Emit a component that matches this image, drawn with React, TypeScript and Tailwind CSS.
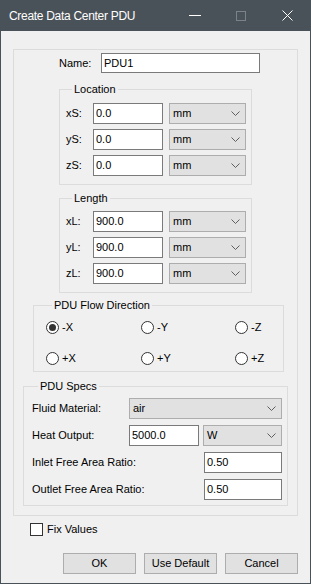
import type { ReactNode } from "react";

const font = { fontFamily: '"Liberation Sans", Arial, sans-serif' };

function Chevron() {
  return (
    <svg width="9" height="5" viewBox="0 0 9 5" className="shrink-0">
      <polyline points="0.5,0.5 4.5,4.5 8.5,0.5" fill="none" stroke="#5f5f5f" strokeWidth="1" />
    </svg>
  );
}

function Combo({ value, width }: { value: string; width: string }) {
  return (
    <div className={`${width} h-[21px] flex items-center justify-between bg-[#e1e1e1] border border-[#adadad] pl-[3px] pr-[5px]`}>
      <span>{value}</span>
      <Chevron />
    </div>
  );
}

function TextBox({ value, width }: { value: string; width: string }) {
  return (
    <div className={`${width} h-[21px] flex items-center bg-white border border-[#7a7a7a] pl-[2px]`}>
      {value}
    </div>
  );
}

function Group({ title, className, children }: { title: string; className: string; children: ReactNode }) {
  return (
    <div className={`border border-[#dcdcdc] ${className}`}>
      <div className="-mt-[7px] ml-[6px] w-fit px-[2px] leading-[13px] bg-[#f0f0f0]">{title}</div>
      {children}
    </div>
  );
}

function AxisRow({ label, value }: { label: string; value: string }) {
  return (
    <div className="flex items-center">
      <span className="w-[27px]">{label}</span>
      <TextBox value={value} width="w-[70px]" />
      <div className="w-[6px]" />
      <Combo value="mm" width="w-[77px]" />
    </div>
  );
}

function Radio({ label, checked = false }: { label: string; checked?: boolean }) {
  return (
    <div className="flex items-center gap-[3px] h-[13px]">
      <div className="w-[13px] h-[13px] rounded-full border border-[#333] bg-white flex items-center justify-center">
        {checked && <div className="w-[7px] h-[7px] rounded-full bg-[#333]" />}
      </div>
      <span>{label}</span>
    </div>
  );
}

function Button({ label }: { label: string }) {
  return (
    <div className="w-[73px] h-[21px] flex items-center justify-center bg-[#e1e1e1] border border-[#adadad]">
      {label}
    </div>
  );
}

export default function App() {
  return (
    <div className="w-[311px] h-[584px] flex flex-col bg-[#f0f0f0] text-[11px] text-black border-x border-b border-[#4a5259]" style={font}>
      {/* Title bar */}
      <div className="-mx-px h-[31px] shrink-0 flex items-center bg-[#4a5259] text-white">
        <span className="flex-1 pl-[9px] text-[12px] tracking-[-0.3px]">Create Data Center PDU</span>
        <div className="w-[46px] h-full flex items-center justify-center">
          <div className="w-[12px] h-px bg-white" />
        </div>
        <div className="w-[46px] h-full flex items-center justify-center">
          <div className="w-[10px] h-[10px] border border-[#7c8287]" />
        </div>
        <div className="w-[46px] h-full flex items-center justify-center mr-px">
          <svg width="11" height="11" viewBox="0 0 11 11">
            <path d="M0.5 0.5 L10.5 10.5 M10.5 0.5 L0.5 10.5" stroke="#fff" strokeWidth="1" />
          </svg>
        </div>
      </div>

      {/* Main group */}
      <div className="mt-[18px] mx-[12px] border border-[#dcdcdc] pt-[3px] pb-[9px]">
        <div className="flex items-center ml-[45px]">
          <span className="w-[42px]">Name:</span>
          <div className="w-[159px] h-[20px] flex items-center bg-white border border-[#7a7a7a] pl-[2px]">PDU1</div>
        </div>

        <Group title="Location" className="mt-[16px] mx-auto w-[193px] pl-[6px] pb-[8px]">
          <div className="mt-[7px] flex flex-col gap-[5px]">
            <AxisRow label="xS:" value="0.0" />
            <AxisRow label="yS:" value="0.0" />
            <AxisRow label="zS:" value="0.0" />
          </div>
        </Group>

        <Group title="Length" className="mt-[13px] mx-auto w-[193px] pl-[6px] pb-[8px]">
          <div className="mt-[6px] flex flex-col gap-[5px]">
            <AxisRow label="xL:" value="900.0" />
            <AxisRow label="yL:" value="900.0" />
            <AxisRow label="zL:" value="900.0" />
          </div>
        </Group>

        <Group title="PDU Flow Direction" className="mt-[12px] ml-[19px] w-[251px] pl-[12px] pb-[6px]">
          <div className="mt-[9px] grid grid-cols-[95px_94px_1fr] gap-y-[18px]">
            <Radio label="-X" checked />
            <Radio label="-Y" />
            <Radio label="-Z" />
            <Radio label="+X" />
            <Radio label="+Y" />
            <Radio label="+Z" />
          </div>
        </Group>

        <Group title="PDU Specs" className="mt-[14px] ml-[9px] w-[265px] pl-[8px] pr-[5px] pb-[5px]">
          <div className="mt-[5px] flex flex-col gap-[6px]">
            <div className="flex items-center">
              <span className="flex-1">Fluid Material:</span>
              <Combo value="air" width="w-[153px]" />
            </div>
            <div className="flex items-center">
              <span className="flex-1">Heat Output:</span>
              <TextBox value="5000.0" width="w-[70px]" />
              <div className="w-[4px]" />
              <Combo value="W" width="w-[79px]" />
            </div>
            <div className="flex items-center">
              <span className="flex-1">Inlet Free Area Ratio:</span>
              <TextBox value="0.50" width="w-[78px]" />
            </div>
            <div className="flex items-center">
              <span className="flex-1">Outlet Free Area Ratio:</span>
              <TextBox value="0.50" width="w-[78px]" />
            </div>
          </div>
        </Group>
      </div>

      {/* Fix values */}
      <div className="mt-[7px] ml-[29px] flex items-center gap-[4px] h-[13px]">
        <div className="w-[13px] h-[13px] border border-[#333] bg-white" />
        <span>Fix Values</span>
      </div>

      {/* Buttons */}
      <div className="mt-[17px] flex justify-end gap-[8px] pr-[12px]">
        <Button label="OK" />
        <Button label="Use Default" />
        <Button label="Cancel" />
      </div>
    </div>
  );
}
